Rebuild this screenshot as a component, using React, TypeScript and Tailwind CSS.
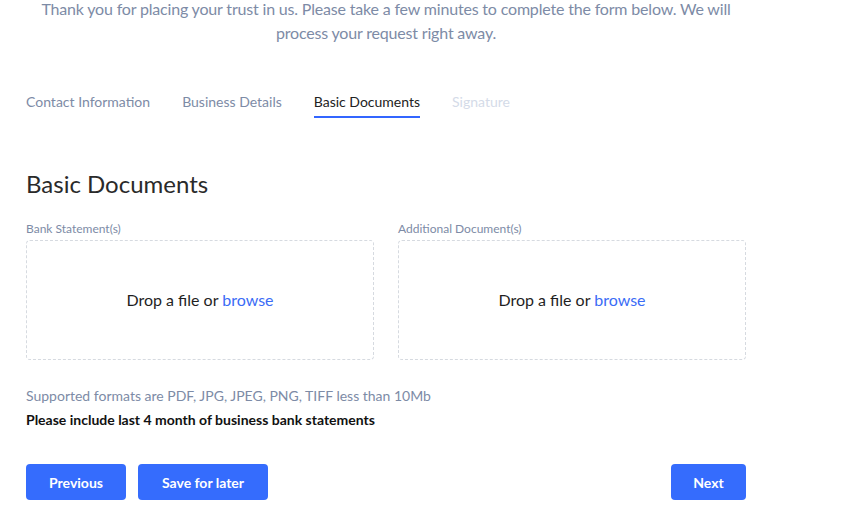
import React from "react";

function Dropzone({ label }: { label: string }) {
  return (
    <div className="flex flex-col">
      <div className="text-[12px] leading-[16px] text-[#7d8ba6] mb-[3px]">{label}</div>
      <div className="h-[120px] rounded-[4px] border border-dashed border-[#d6dae0] flex items-center justify-center">
        <span className="text-[16px] text-[#1f1f1f]">
          Drop a file or <span className="text-[#3b6cf6]">browse</span>
        </span>
      </div>
    </div>
  );
}

export default function App() {
  return (
    <div className="w-[841px] h-[524px] bg-white overflow-hidden" style={{ fontFamily: "Lato, 'Noto Sans', sans-serif" }}>
      <div className="ml-[26px] w-[720px]">
        <p className="-mt-[3px] text-center text-[16px] leading-[24px] tracking-[-0.18px] text-[#7d8ba6]">
          Thank you for placing your trust in us. Please take a few minutes to complete the form below. We will process your request right away.
        </p>
        <div className="mt-[47px] flex gap-[32px] text-[14px] leading-[20px]">
          <div className="text-[#7d8ba6] pb-[5px]">Contact Information</div>
          <div className="text-[#7d8ba6] pb-[5px]">Business Details</div>
          <div className="text-[#222] pb-[4px] border-b-2 border-[#3366ff]">Basic Documents</div>
          <div className="text-[#d4dbe8] pb-[5px]">Signature</div>
        </div>
        <h2 className="mt-[50px] text-[24px] leading-[32px] text-[#2a2a2a]">Basic Documents</h2>
        <div className="mt-[21px] grid grid-cols-2 gap-[24px]">
          <Dropzone label="Bank Statement(s)" />
          <Dropzone label="Additional Document(s)" />
        </div>
        <div className="mt-[26px] text-[14px] leading-[20px] text-[#7d8ba6]">
          Supported formats are PDF, JPG, JPEG, PNG, TIFF less than 10Mb
        </div>
        <div className="mt-[4px] text-[14px] leading-[20px] font-bold text-[#111]">
          Please include last 4 month of business bank statements
        </div>
        <div className="mt-[34px] flex items-center">
          <button className="h-[36px] w-[100px] rounded-[4px] bg-[#356cfd] text-white text-[14px] font-bold">Previous</button>
          <button className="ml-[12px] h-[36px] w-[130px] rounded-[4px] bg-[#356cfd] text-white text-[14px] font-bold">Save for later</button>
          <button className="ml-auto h-[36px] w-[75px] rounded-[4px] bg-[#356cfd] text-white text-[14px] font-bold">Next</button>
        </div>
      </div>
    </div>
  );
}
